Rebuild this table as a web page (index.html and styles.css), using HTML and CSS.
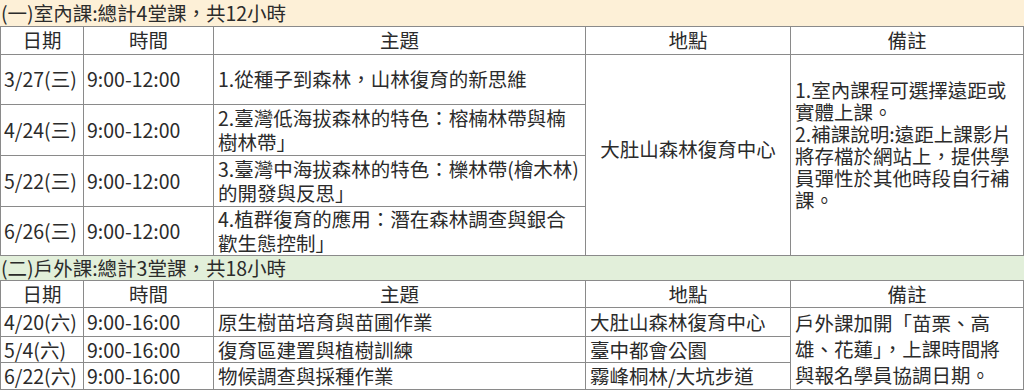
FILE: index.html
```html
<!DOCTYPE html>
<html lang="zh-TW">
<head>
    <meta charset="UTF-8">
    <meta name="viewport" content="width=device-width, initial-scale=1.0">
    <title>課程表</title>
    <link rel="stylesheet" href="styles.css">
</head>
<body>

<!-- 室內課 -->
<div class="section-title indoor">(一)室內課:總計4堂課，共12小時</div>
<table class="schedule">
    <colgroup>
        <col class="c-date">
        <col class="c-time">
        <col class="c-topic">
        <col class="c-place">
        <col class="c-note">
    </colgroup>
    <thead>
        <tr class="head-row">
            <th>日期</th>
            <th>時間</th>
            <th>主題</th>
            <th>地點</th>
            <th>備註</th>
        </tr>
    </thead>
    <tbody>
        <tr class="tall r1">
            <td>3/27(三)</td>
            <td>9:00-12:00</td>
            <td class="topic">1.從種子到森林，山林復育的新思維</td>
            <td class="center" rowspan="4">大肚山森林復育中心</td>
            <td class="note note-indoor" rowspan="4">1.室內課程可選擇遠距或<br>實體上課。<br>2.補課說明:遠距上課影片<br>將存檔於網站上，提供學<br>員彈性於其他時段自行補<br>課。</td>
        </tr>
        <tr class="tall r2">
            <td>4/24(三)</td>
            <td>9:00-12:00</td>
            <td class="topic">2.臺灣低海拔森林的特色：榕楠林帶與楠<br>樹林帶」</td>
        </tr>
        <tr class="tall r3">
            <td>5/22(三)</td>
            <td>9:00-12:00</td>
            <td class="topic">3.臺灣中海拔森林的特色：櫟林帶(檜木林)<br>的開發與反思」</td>
        </tr>
        <tr class="tall r4">
            <td>6/26(三)</td>
            <td>9:00-12:00</td>
            <td class="topic">4.植群復育的應用：潛在森林調查與銀合<br>歡生態控制」</td>
        </tr>
    </tbody>
</table>

<!-- 戶外課 -->
<div class="section-title outdoor">(二)戶外課:總計3堂課，共18小時</div>
<table class="schedule">
    <colgroup>
        <col class="c-date">
        <col class="c-time">
        <col class="c-topic">
        <col class="c-place">
        <col class="c-note">
    </colgroup>
    <thead>
        <tr class="head-row">
            <th>日期</th>
            <th>時間</th>
            <th>主題</th>
            <th>地點</th>
            <th>備註</th>
        </tr>
    </thead>
    <tbody>
        <tr class="short s1">
            <td>4/20(六)</td>
            <td>9:00-16:00</td>
            <td class="topic">原生樹苗培育與苗圃作業</td>
            <td class="place">大肚山森林復育中心</td>
            <td class="note note-outdoor" rowspan="3">戶外課加開「苗栗、高<br>雄、花蓮」，上課時間將<br>與報名學員協調日期。</td>
        </tr>
        <tr class="short s2">
            <td>5/4(六)</td>
            <td>9:00-16:00</td>
            <td class="topic">復育區建置與植樹訓練</td>
            <td class="place">臺中都會公園</td>
        </tr>
        <tr class="short s3">
            <td>6/22(六)</td>
            <td>9:00-16:00</td>
            <td class="topic">物候調查與採種作業</td>
            <td class="place">霧峰桐林/大坑步道</td>
        </tr>
    </tbody>
</table>

</body>
</html>
```

FILE: styles.css
```css
body {
    margin: 0;
    padding: 0;
    background-color: #ffffff;
    color: #2b2b2b;
    font-family: "Noto Sans CJK TC", "Noto Sans", sans-serif;
    font-size: 19.5px;
    width: 1024px;
    overflow: hidden;
}

/* 區塊標題 */
.section-title {
    box-sizing: border-box;
    padding-left: 1px;
    border-bottom: 1px solid #8a8a8a;
    white-space: nowrap;
}

.indoor {
    height: 27px;
    line-height: 26px;
    background-color: #fdf0d7;
}

.outdoor {
    height: 25px;
    line-height: 24px;
    background-color: #e2efda;
}

/* 表格 */
.schedule {
    width: 1023px;
    border-collapse: collapse;
    table-layout: fixed;
}

.c-date { width: 83px; }
.c-time { width: 130px; }
.c-topic { width: 372px; }
.c-place { width: 205px; }
.c-note { width: 233px; }

.schedule th,
.schedule td {
    border: 1px solid #8a8a8a;
    padding: 0 0 0 3px;
    text-align: left;
    vertical-align: middle;
    white-space: nowrap;
    line-height: 22px;
}

.schedule thead tr:first-child th {
    border-top: none;
}

.schedule th {
    font-weight: normal;
    text-align: center;
    padding: 0;
}

.head-row { height: 27px; }

.tall { height: 50px; }
.r2, .r3 { height: 51px; }
.r4 { height: 48px; }

.short { height: 27px; }
.s1 { height: 29px; }
.s2 { height: 26px; }

.schedule td.topic {
    padding-left: 4px;
    line-height: 24px;
}

.schedule td.center {
    text-align: center;
    padding: 0 0 12px 0;
}

.schedule td.place {
    padding-left: 4px;
}

.schedule td.note {
    padding-left: 4px;
}

.schedule td.note-indoor {
    line-height: 22px;
    padding-bottom: 20px;
}

.schedule td.note-outdoor {
    line-height: 26px;
    padding-top: 0;
}
```
